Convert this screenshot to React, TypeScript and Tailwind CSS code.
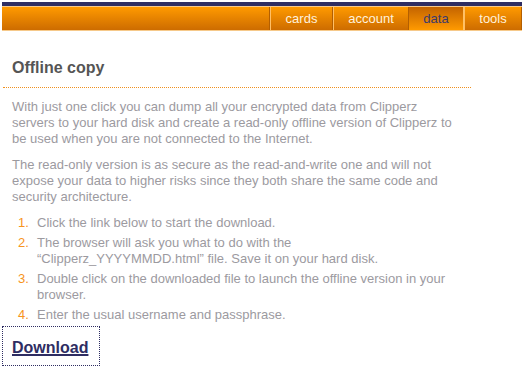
import React from 'react';

const tabs = [
  { label: 'cards', width: 'w-[63px]', active: false },
  { label: 'account', width: 'w-[76px]', active: false },
  { label: 'data', width: 'w-[55px]', active: true },
  { label: 'tools', width: 'w-[58px]', active: false },
];

const steps: React.ReactNode[] = [
  'Click the link below to start the download.',
  <>The browser will ask you what to do with the “Clipperz_YYYYMMDD.html” file. Save it on your hard disk.</>,
  'Double click on the downloaded file to launch the offline version in your browser.',
  'Enter the usual username and passphrase.',
];

const NavBar: React.FC = () => (
  <div className="ml-[2px] w-[520px] pt-[2px]">
    <div className="h-[4px] bg-[#2e2d62]" />
    <div className="flex h-[25px] justify-end border-t border-b border-[#f6c98a] bg-gradient-to-b from-[#ff9a00] to-[#cd6c00]">
      <div className="flex border-l border-[#b45f00]">
        {tabs.map((tab) =>
          tab.active ? (
            <div
              key={tab.label}
              className={`${tab.width} flex items-center justify-center border-r border-[#ffc266] bg-gradient-to-b from-[#c46400] to-[#ff9a00] text-[13px] text-[#3b3a6c]`}
            >
              {tab.label}
            </div>
          ) : (
            <div
              key={tab.label}
              className={`${tab.width} flex items-center justify-center border-l border-r border-l-[#ffbf66] border-r-[#b45f00] text-[13px] text-[#fff1dc]`}
            >
              {tab.label}
            </div>
          )
        )}
      </div>
    </div>
  </div>
);

export default function App() {
  return (
    <div className="h-[374px] w-[523px] overflow-hidden bg-white font-['Liberation_Sans',Arial,sans-serif]">
      <NavBar />

      <h2 className="ml-[3px] mt-[27px] w-[468px] border-b border-dotted border-[#f0901e] pb-[9px] pl-[9px] text-[16px] font-bold leading-[20px] text-[#555555]">
        Offline copy
      </h2>

      <div className="w-[460px] pl-[12px] text-[13px] leading-[16px] text-[#9c9a9f]">
        <p className="mt-[11px]">
          With just one click you can dump all your encrypted data from Clipperz servers to your hard disk and
          create a read-only offline version of Clipperz to be used when you are not connected to the Internet.
        </p>
        <p className="mt-[10px]">
          The read-only version is as secure as the read-and-write one and will not expose your data to higher
          risks since they both share the same code and security architecture.
        </p>

        <ol className="mt-[10px] flex flex-col gap-[4px]">
          {steps.map((step, i) => (
            <li key={i} className="flex">
              <span className="w-[25px] shrink-0 pl-[6px] text-[#f7941d]">{i + 1}.</span>
              <span>{step}</span>
            </li>
          ))}
        </ol>
      </div>

      <a
        href="#"
        className="ml-[2px] mt-[3px] inline-block border border-dotted border-[#2e2d62] pb-[7px] pl-[9px] pr-[11px] pt-[11px] text-[16px] font-bold leading-[20px] text-[#2e2d62] underline decoration-2"
      >
        Download
      </a>
    </div>
  );
}
